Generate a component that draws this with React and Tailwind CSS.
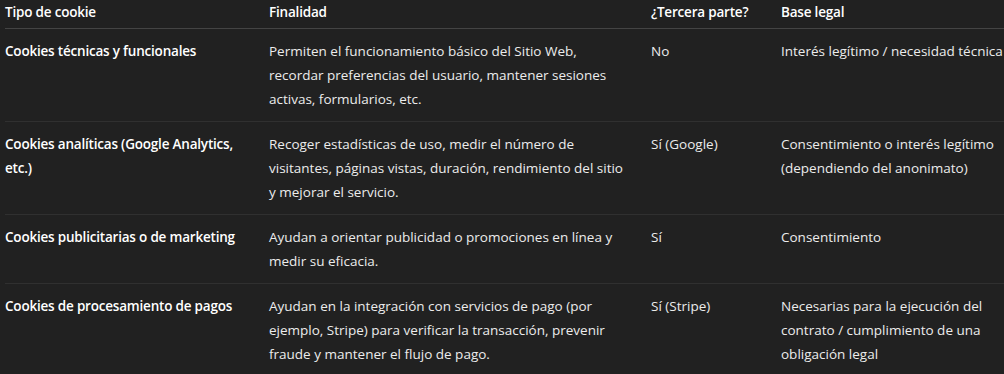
import React from 'react';

const rows = [
  {
    type: 'Cookies técnicas y funcionales',
    purpose: 'Permiten el funcionamiento básico del Sitio Web, recordar preferencias del usuario, mantener sesiones activas, formularios, etc.',
    third: 'No',
    basis: 'Interés legítimo / necesidad técnica',
  },
  {
    type: 'Cookies analíticas (Google Analytics, etc.)',
    purpose: 'Recoger estadísticas de uso, medir el número de visitantes, páginas vistas, duración, rendimiento del sitio y mejorar el servicio.',
    third: 'Sí (Google)',
    basis: 'Consentimiento o interés legítimo (dependiendo del anonimato)',
  },
  {
    type: 'Cookies publicitarias o de marketing',
    purpose: 'Ayudan a orientar publicidad o promociones en línea y medir su eficacia.',
    third: 'Sí',
    basis: 'Consentimiento',
  },
  {
    type: 'Cookies de procesamiento de pagos',
    purpose: 'Ayudan en la integración con servicios de pago (por ejemplo, Stripe) para verificar la transacción, prevenir fraude y mantener el flujo de pago.',
    third: 'Sí (Stripe)',
    basis: 'Necesarias para la ejecución del contrato / cumplimiento de una obligación legal',
  },
];

const App = () => {
  return (
    <div className="min-h-screen w-full bg-[#212121] pl-[5px] text-[13.5px] leading-6 text-[#ececec] font-['Open_Sans',sans-serif] overflow-hidden">
      <table className="w-[1002px] table-fixed border-collapse text-left">
        <colgroup>
          <col className="w-[264px]" />
          <col className="w-[382px]" />
          <col className="w-[130px]" />
          <col />
        </colgroup>
        <thead>
          <tr className="border-b border-[#444444]">
            <th className="pb-1 pr-4 font-semibold tracking-[-0.2px] text-white">Tipo de cookie</th>
            <th className="pb-1 pr-4 font-semibold tracking-[-0.2px] text-white">Finalidad</th>
            <th className="pb-1 pr-4 font-semibold tracking-[-0.2px] text-white">¿Tercera parte?</th>
            <th className="pb-1 font-semibold tracking-[-0.2px] text-white">Base legal</th>
          </tr>
        </thead>
        <tbody>
          {rows.map((r) => (
            <tr key={r.type} className="border-b border-[#303030] align-top">
              <td className="py-2.5 pr-4 font-semibold tracking-[-0.2px] text-white">{r.type}</td>
              <td className="py-2.5 pr-[24px]">{r.purpose}</td>
              <td className="py-2.5 pr-4">{r.third}</td>
              <td className="py-2.5">{r.basis}</td>
            </tr>
          ))}
        </tbody>
      </table>
    </div>
  );
};

export default App;
